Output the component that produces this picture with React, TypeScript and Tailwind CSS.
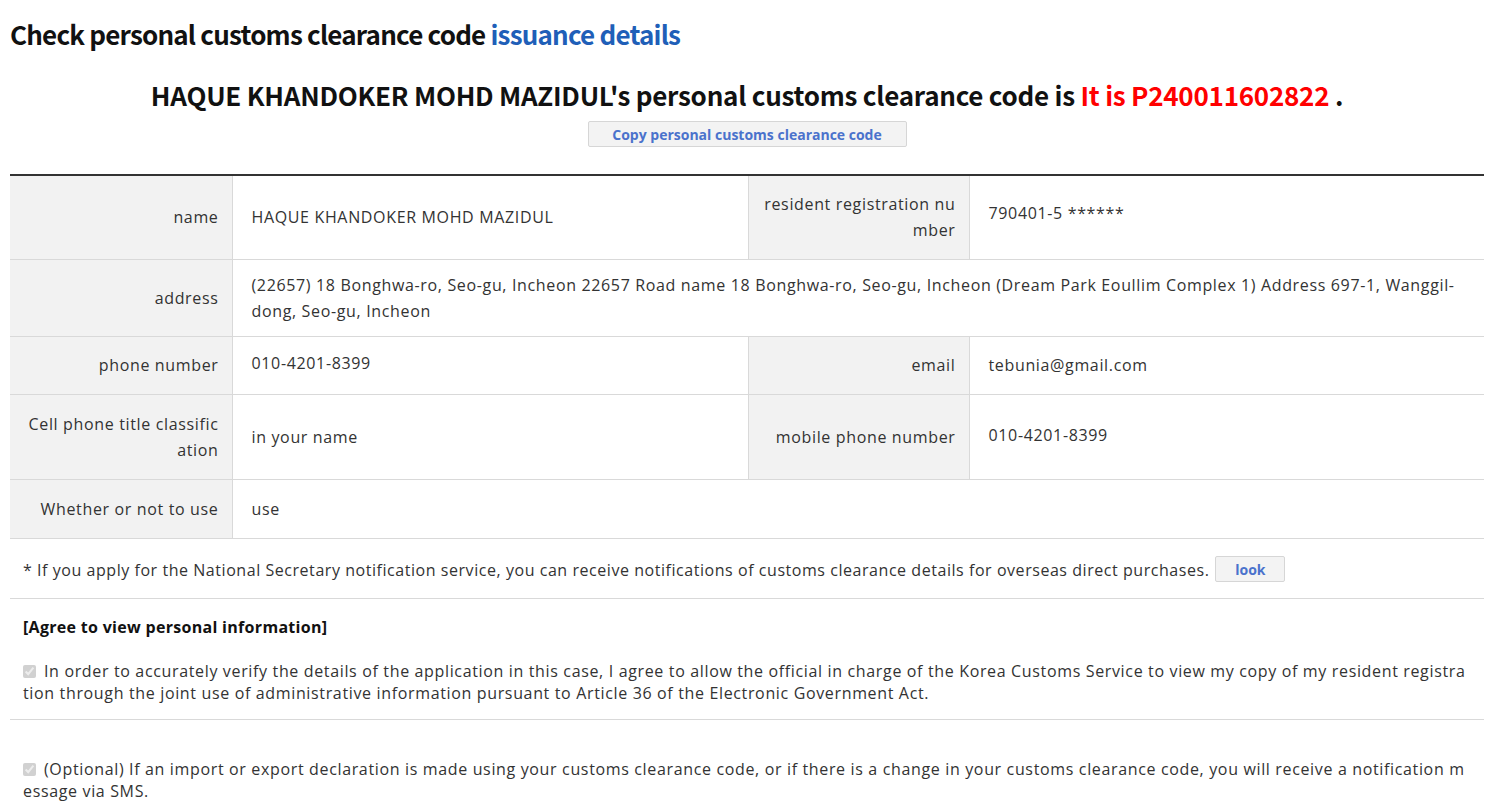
import React from "react";

const body = { fontFamily: '"Open Sans", "Noto Sans CJK KR", sans-serif' };
const head = { fontFamily: '"Noto Sans CJK KR", "Noto Sans", sans-serif' };

function Label({ children, className = "" }: { children: React.ReactNode; className?: string }) {
    return (
        <th className={`bg-[#f2f2f2] text-right font-normal pr-[13px] pl-3 align-middle border-r border-[#d9d9d9] ${className}`}>
            {children}
        </th>
    );
}

function Value({ children, colSpan, className = "" }: { children: React.ReactNode; colSpan?: number; className?: string }) {
    return (
        <td colSpan={colSpan} className={`pl-[19px] pr-2 text-left align-middle ${className}`}>
            {children}
        </td>
    );
}

export default function App() {
    return (
        <div className="bg-white min-h-screen text-[#333] pl-[10px] pr-[5px] pt-[17px] tracking-[0.65px]" style={body}>
            {/* Page title */}
            <h2 className="text-[26px] leading-[34px] font-bold text-[#111] tracking-[-0.8px]" style={head}>
                Check personal customs clearance code <span className="text-[#1f5fb8]">issuance details</span>
            </h2>

            {/* Result */}
            <div className="mt-[27px] text-center">
                <p className="text-[26px] leading-[34px] font-bold text-[#111] tracking-[-0.25px]" style={head}>
                    HAQUE KHANDOKER MOHD MAZIDUL's personal customs clearance code is{" "}
                    <span className="text-[#f00]">It is P240011602822</span> .
                </p>
                <button className="mt-[9px] w-[319px] h-[26px] bg-[#f3f3f3] border border-[#d6d6d6] rounded-[2px] text-[14px] font-bold text-[#4a72cc] tracking-normal">
                    Copy personal customs clearance code
                </button>
            </div>

            {/* Info table */}
            <table className="mt-[27px] w-full border-collapse border-t-2 border-[#333] text-[16px] leading-[26px]">
                <colgroup>
                    <col className="w-[222px]" />
                    <col className="w-[516px]" />
                    <col className="w-[221px]" />
                    <col />
                </colgroup>
                <tbody>
                    <tr className="h-[84px] border-b border-[#d9d9d9]">
                        <Label>name</Label>
                        <Value className="border-r border-[#d9d9d9]">HAQUE KHANDOKER MOHD MAZIDUL</Value>
                        <Label>resident registration nu<br />mber</Label>
                        <Value className="pb-2">790401-5 ******</Value>
                    </tr>
                    <tr className="h-[77px] border-b border-[#d9d9d9]">
                        <Label>address</Label>
                        <Value colSpan={3}>
                            (22657) 18 Bonghwa-ro, Seo-gu, Incheon 22657 Road name 18 Bonghwa-ro, Seo-gu, Incheon (Dream Park Eoullim Complex 1) Address 697-1, Wanggil-<br />dong, Seo-gu, Incheon
                        </Value>
                    </tr>
                    <tr className="h-[58px] border-b border-[#d9d9d9]">
                        <Label>phone number</Label>
                        <Value className="border-r border-[#d9d9d9] pb-1">010-4201-8399</Value>
                        <Label>email</Label>
                        <Value>tebunia@gmail.com</Value>
                    </tr>
                    <tr className="h-[85px] border-b border-[#d9d9d9]">
                        <Label>Cell phone title classific<br />ation</Label>
                        <Value className="border-r border-[#d9d9d9]">in your name</Value>
                        <Label>mobile phone number</Label>
                        <Value className="pb-1">010-4201-8399</Value>
                    </tr>
                    <tr className="h-[59px] border-b border-[#d9d9d9]">
                        <Label>Whether or not to use</Label>
                        <Value colSpan={3}>use</Value>
                    </tr>
                </tbody>
            </table>

            {/* Notification notice */}
            <div className="flex items-center h-[60px] px-[13px] border-b border-[#d9d9d9] text-[16px]">
                <span className="mt-[4px] tracking-[0.55px]">* If you apply for the National Secretary notification service, you can receive notifications of customs clearance details for overseas direct purchases.</span>
                <button className="ml-[6px] w-[70px] h-[26px] mt-[2px] bg-[#f3f3f3] border border-[#d6d6d6] rounded-[2px] text-[14px] font-bold text-[#4a72cc] tracking-normal">
                    look
                </button>
            </div>

            {/* Agreement */}
            <div className="px-[13px] pt-[17px] pb-[15px] border-b border-[#d9d9d9] text-[16px] leading-[22px]">
                <p className="font-bold text-[#111] tracking-[0.3px]">[Agree to view personal information]</p>
                <p className="mt-[22px]">
                    <input type="checkbox" checked disabled readOnly className="w-[13px] h-[13px] mr-[8px] align-[-1px]" />
                    In order to accurately verify the details of the application in this case, I agree to allow the official in charge of the Korea Customs Service to view my copy of my resident registra<br />tion through the joint use of administrative information pursuant to Article 36 of the Electronic Government Act.
                </p>
            </div>

            <div className="px-[13px] pt-[38px] text-[16px] leading-[22px]">
                <p>
                    <input type="checkbox" checked disabled readOnly className="w-[13px] h-[13px] mr-[8px] align-[-1px]" />
                    (Optional) If an import or export declaration is made using your customs clearance code, or if there is a change in your customs clearance code, you will receive a notification m<br />essage via SMS.
                </p>
            </div>
        </div>
    );
}
